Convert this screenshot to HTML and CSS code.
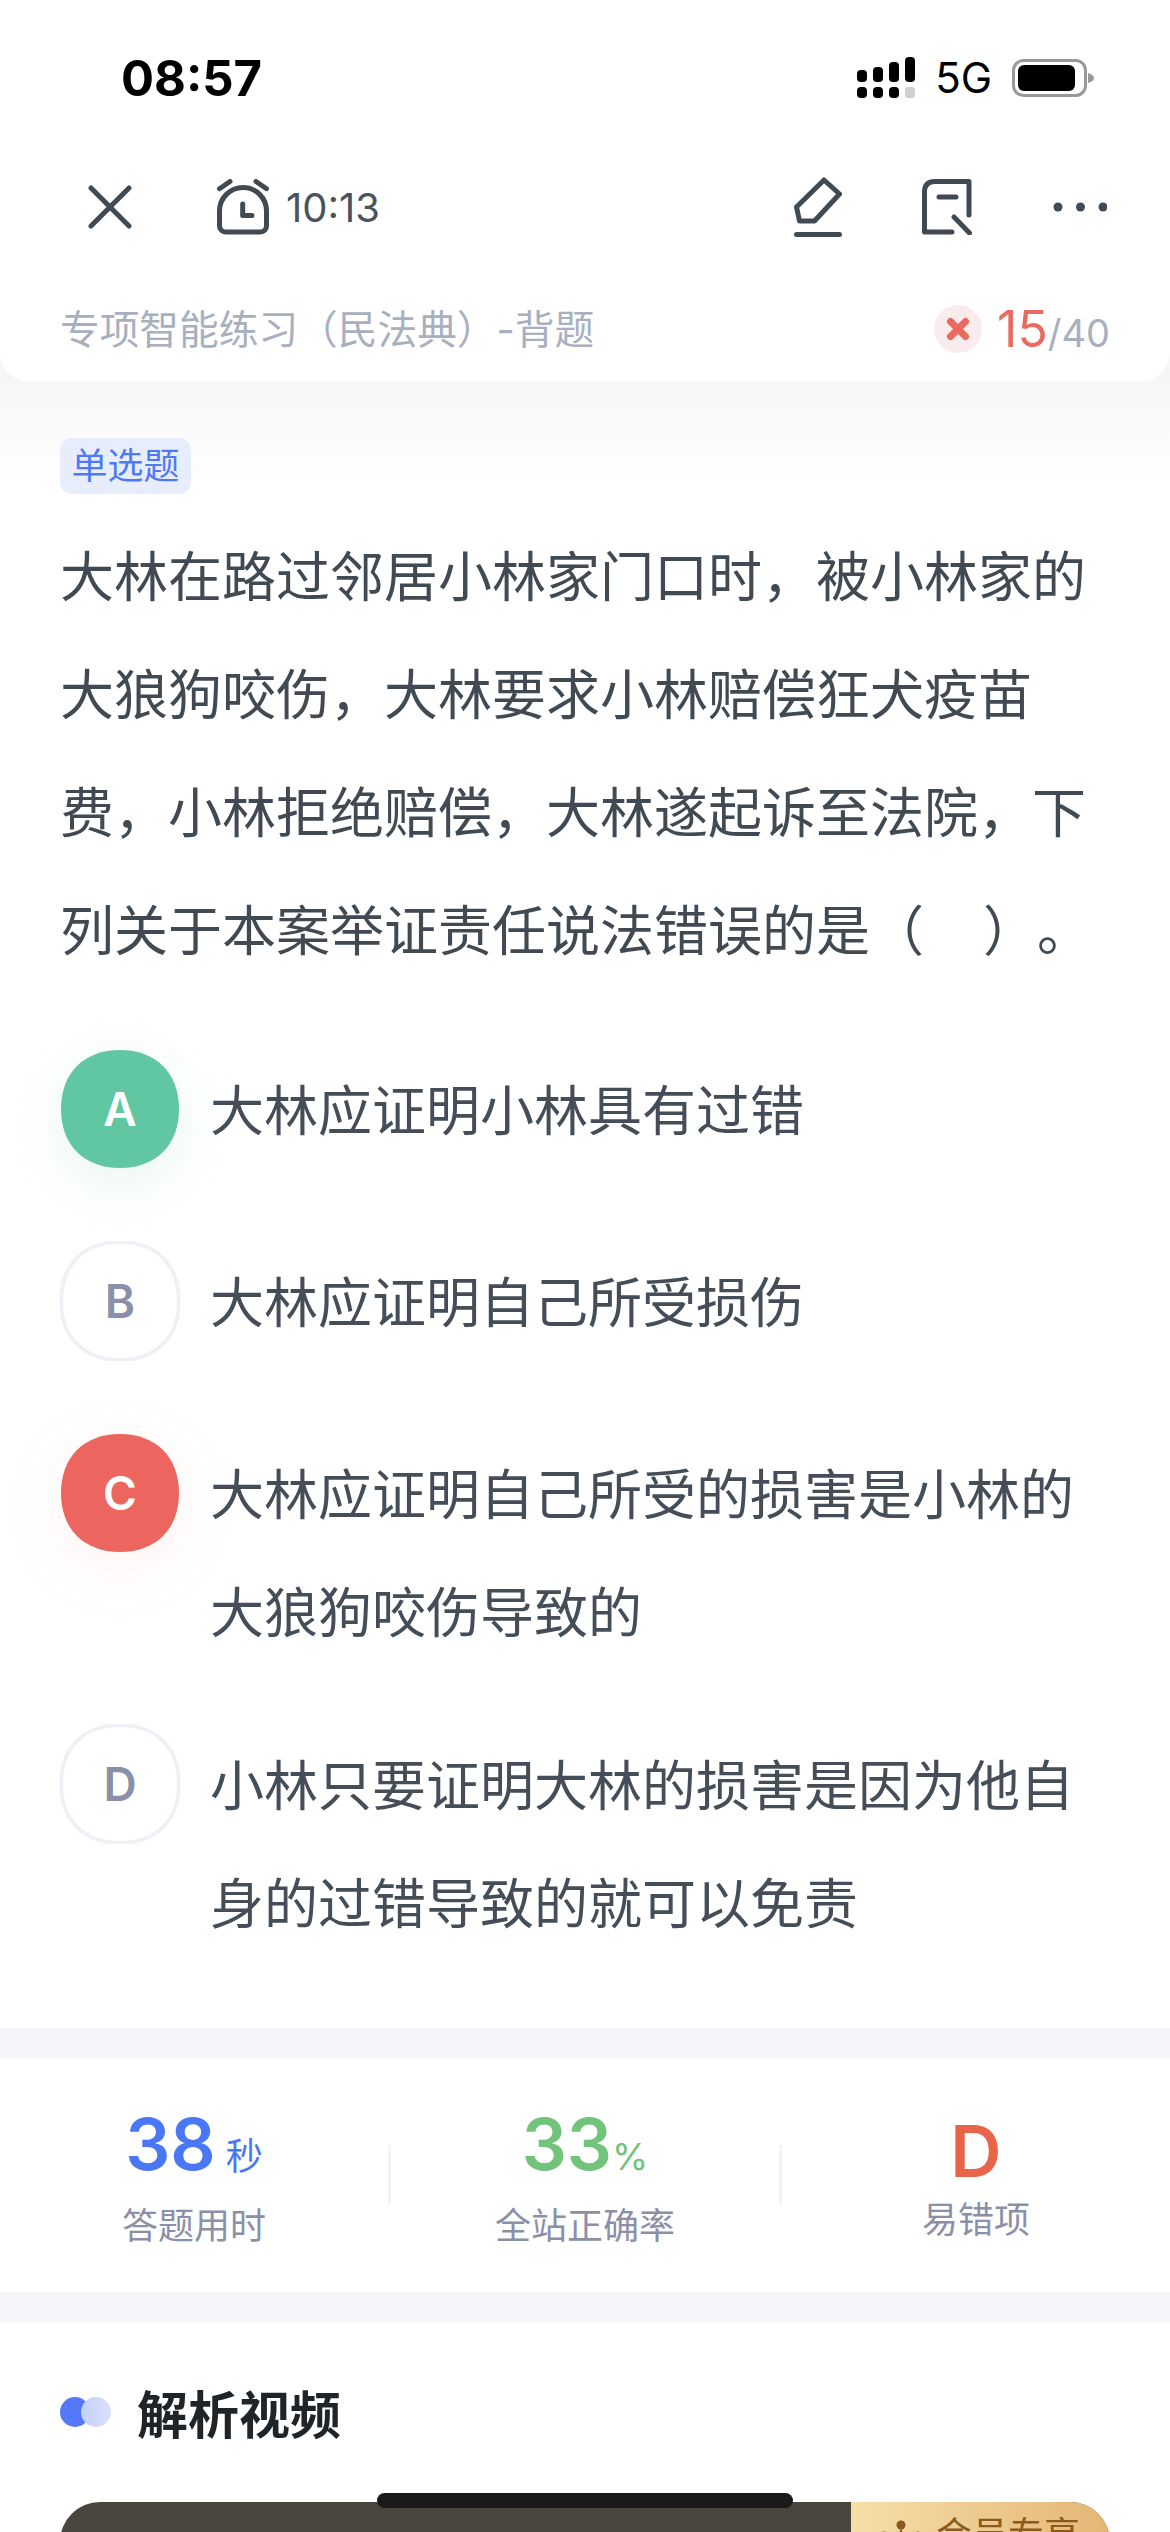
FILE: index.html
```html
<!DOCTYPE html>
<html lang="zh-CN">
  <head>
    <meta charset="UTF-8" />
    <meta name="viewport" content="width=device-width, initial-scale=1.0" />
    <title>专项智能练习</title>
    <link rel="stylesheet" href="styles.css">
  </head>
  <body>
    <header class="top">
      <div class="status">
        <span class="clock">08:57</span>
        <div class="status-right">
          <svg class="signal" width="58" height="42" viewBox="0 0 58 42">
            <rect x="0" y="13" width="10" height="12" rx="4" />
            <rect x="16" y="10" width="10" height="15" rx="4" />
            <rect x="32" y="5" width="10" height="20" rx="4" />
            <rect x="48" y="0" width="10" height="25" rx="4" />
            <rect x="0" y="30" width="10" height="11" rx="4" />
            <rect x="16" y="30" width="10" height="11" rx="4" />
            <rect x="32" y="30" width="10" height="11" rx="4" />
            <rect x="48" y="30" width="10" height="11" rx="3" fill="#cfcfcf" />
          </svg>
          <span class="net">5G</span>
          <svg class="battery" width="83" height="38" viewBox="0 0 83 38">
            <rect x="1.5" y="1.5" width="72" height="35" rx="10" fill="none" stroke="#999" stroke-width="3" />
            <rect x="6" y="6" width="57" height="26" rx="6" fill="#000" />
            <path d="M76 14c4 1 6 3 6 5s-2 4-6 5z" fill="#999" />
          </svg>
        </div>
      </div>

      <nav class="toolbar">
        <svg class="icon" width="44" height="44" viewBox="0 0 44 44">
          <path d="M3 3l38 38M41 3L3 41" />
        </svg>
        <svg class="icon alarm" width="52" height="56" viewBox="0 0 52 56">
          <path d="M2.5 32a23.5 23.5 0 0 1 47 0v15a6 6 0 0 1-6 6h-35a6 6 0 0 1-6-6z" />
          <path d="M2.5 9.7L13 2.5M39 2.5l10.5 7.2" />
          <path d="M25.7 25v11.5H35" />
        </svg>
        <span class="timer">10:13</span>
        <div class="toolbar-right">
          <svg class="icon" width="48" height="60" viewBox="0 0 48 60">
            <path d="M30 3l15.5 14-25 27H5.5l-3-14z" />
            <path d="M2.5 57.5h43" />
          </svg>
          <svg class="icon" width="50" height="56" viewBox="0 0 50 56">
            <path d="M47 36V2.5H13Q2.500 2.500 2.500 13V53H30" />
            <path d="M17 18h17M32 38l15.500 16" />
          </svg>
          <svg class="more" width="54" height="10" viewBox="0 0 54 10">
            <circle cx="5" cy="5" r="4.500" />
            <circle cx="27.500" cy="5" r="4.500" />
            <circle cx="50" cy="5" r="4.500" />
          </svg>
        </div>
      </nav>

      <div class="subbar">
        <span class="paper">专项智能练习（民法典）-背题</span>
        <div class="progress">
          <svg class="wrong" width="48" height="48" viewBox="0 0 48 48">
            <circle cx="24" cy="24" r="24" fill="#faecec" />
            <path d="M16.500 16.500l15 15M31.500 16.500l-15 15" />
          </svg>
          <span class="done">15</span><span class="total">/40</span>
        </div>
      </div>
    </header>

    <main class="question">
      <span class="tag">单选题</span>
      <p class="stem">大林在路过邻居小林家门口时，被小林家的大狼狗咬伤，大林要求小林赔偿狂犬疫苗费，小林拒绝赔偿，大林遂起诉至法院，下列关于本案举证责任说法错误的是（　&#8202;）。</p>

      <ul class="options">
        <li class="option right">
          <div class="badge">
            <svg width="120" height="120" viewBox="0 0 120 120"><path d="M60 1C96 1 119 24 119 60S96 119 60 119 1 96 1 60 24 1 60 1z" /></svg>
            <span>A</span>
          </div>
          <p>大林应证明小林具有过错</p>
        </li>
        <li class="option">
          <div class="badge">
            <svg width="120" height="120" viewBox="0 0 120 120"><path d="M60 1C96 1 119 24 119 60S96 119 60 119 1 96 1 60 24 1 60 1z" /></svg>
            <span>B</span>
          </div>
          <p>大林应证明自己所受损伤</p>
        </li>
        <li class="option wrong-pick">
          <div class="badge">
            <svg width="120" height="120" viewBox="0 0 120 120"><path d="M60 1C96 1 119 24 119 60S96 119 60 119 1 96 1 60 24 1 60 1z" /></svg>
            <span>C</span>
          </div>
          <p>大林应证明自己所受的损害是小林的大狼狗咬伤导致的</p>
        </li>
        <li class="option">
          <div class="badge">
            <svg width="120" height="120" viewBox="0 0 120 120"><path d="M60 1C96 1 119 24 119 60S96 119 60 119 1 96 1 60 24 1 60 1z" /></svg>
            <span>D</span>
          </div>
          <p>小林只要证明大林的损害是因为他自身的过错导致的就可以免责</p>
        </li>
      </ul>
    </main>

    <section class="stats">
      <div class="stat">
        <div class="value blue">38<small class="unit-gap">秒</small></div>
        <div class="label">答题用时</div>
      </div>
      <div class="divider"></div>
      <div class="stat">
        <div class="value green">33<small>%</small></div>
        <div class="label">全站正确率</div>
      </div>
      <div class="divider"></div>
      <div class="stat">
        <div class="value red">D</div>
        <div class="label">易错项</div>
      </div>
    </section>

    <section class="analysis">
      <h2><span class="dots"><i></i><i></i></span>解析视频</h2>
      <div class="video">
        <div class="vip">
          <svg width="42" height="30" viewBox="0 0 42 30">
            <circle cx="21" cy="6" r="4.500" />
            <path d="M21 8l6 22H15z" />
            <circle cx="4" cy="16" r="3.500" />
            <circle cx="38" cy="16" r="3.500" />
          </svg>
          <span>会员专享</span>
        </div>
      </div>
    </section>

    <div class="home-bar"></div>
  </body>
</html>
```

FILE: styles.css
```css
* {
  box-sizing: border-box;
}
html, body {
  height: 2532px;
  overflow: hidden;
}
body {
  position: relative;
  margin: 0;
  font-family: Inter, "Noto Sans CJK SC", sans-serif;
  color: #414a53;
  background: linear-gradient(#f6f6f6 382px, #fff 490px);
}
.top {
  background: #fff;
  border-radius: 0 0 30px 30px;
  height: 382px;
}
.status {
  display: flex;
  justify-content: space-between;
  align-items: center;
  height: 156px;
  padding: 0 75px 0 121px;
}
.clock {
  font-size: 49px;
  font-weight: 700;
  color: #000;
}
.status-right {
  display: flex;
  align-items: center;
  gap: 20px;
}
.signal {
  fill: #000;
}
.net {
  font-size: 42px;
  color: #000;
  line-height: 1;
}
.toolbar {
  display: flex;
  align-items: center;
  height: 102px;
  padding: 0 63px 0 88px;
}
.icon {
  fill: none;
  stroke: #414a53;
  stroke-width: 5;
  stroke-linecap: round;
  stroke-linejoin: round;
}
.alarm {
  margin-left: 85px;
}
.timer {
  margin-left: 17px;
  font-size: 40px;
  color: #4a535c;
}
.toolbar-right {
  display: flex;
  align-items: center;
  margin-left: auto;
}
.toolbar-right .icon:nth-child(2) {
  margin-left: 80px;
}
.more {
  margin-left: 81px;
  fill: #414a53;
}
.subbar {
  display: flex;
  justify-content: space-between;
  align-items: center;
  height: 80px;
  margin-top: 30px;
  padding: 0 60px;
}
.paper {
  margin-top: -4px;
  font-size: 39.7px;
  color: #a8b0c0;
}
.progress {
  display: flex;
  align-items: baseline;
  margin-top: 2px;
}
.wrong {
  align-self: center;
  margin-right: 15px;
  fill: none;
  stroke: #ea6a60;
  stroke-width: 7;
  stroke-linecap: round;
}
.wrong circle {
  stroke: none;
}
.done {
  font-size: 50px;
  color: #ea6a60;
}
.total {
  font-size: 38px;
  color: #a8b0c0;
}

.question {
  height: 1646px;
  padding: 56px 60px 0;
}
.tag {
  display: block;
  width: 131px;
  height: 56px;
  border-radius: 12px;
  background: #e8edfb;
  color: #4f7af5;
  font-size: 36px;
  line-height: 56px;
  text-align: center;
}
.stem {
  margin: 25px 0 58px;
  font-size: 54px;
  line-height: 118px;
  text-spacing-trim: space-all;
}
.options {
  display: flex;
  flex-direction: column;
  gap: 55px;
  margin: 0;
  padding: 0;
  list-style: none;
}
.option {
  display: flex;
  gap: 30px;
  min-height: 137px;
}
.option p {
  flex: 1;
  margin: 4px 0 -4px;
  font-size: 54px;
  line-height: 118px;
  color: #454e58;
}
.badge {
  display: grid;
  flex: none;
  width: 120px;
  height: 120px;
  place-items: center;
}
.badge svg, .badge span {
  grid-area: 1 / 1;
}
.badge svg {
  fill: #fff;
  stroke: #f0f1f6;
  stroke-width: 4;
}
.badge span {
  position: relative;
  font-size: 46px;
  font-weight: 600;
  color: #8b90aa;
}
.right svg {
  fill: #61c7a3;
  stroke: none;
  filter: drop-shadow(0 16px 30px rgba(97, 199, 163, 0.16));
}
.wrong-pick svg {
  fill: #ec665f;
  stroke: none;
  filter: drop-shadow(0 16px 30px rgba(236, 102, 95, 0.08));
}
.right span, .wrong-pick span {
  color: #fff;
}

.stats {
  display: flex;
  align-items: center;
  height: 294px;
  background: #fff;
  border-top: 30px solid #f5f6fa;
  border-bottom: 30px solid #f5f6fa;
}
.stat {
  flex: 1;
  text-align: center;
}
.divider {
  flex: none;
  width: 3px;
  height: 60px;
  background: #f3f4f8;
}
.value {
  font-size: 71px;
  font-weight: 600;
  line-height: 84px;
}
.value small {
  font-size: 37px;
  font-weight: 400;
}
.unit-gap {
  margin-left: 10px;
}
.blue {
  color: #4a78f5;
}
.green {
  color: #72c37b;
}
.red {
  color: #e8654a;
}
.label {
  margin-top: 5px;
  font-size: 36px;
  line-height: 44px;
  color: #8b90a8;
}

.analysis {
  padding: 0 60px;
}
.analysis h2 {
  display: flex;
  align-items: center;
  height: 60px;
  margin: 60px 0 0;
  font-size: 51px;
  font-weight: 700;
  color: #1f2429;
}
.dots {
  display: flex;
  margin-right: 26px;
}
.dots i {
  display: block;
  width: 30px;
  height: 30px;
  border-radius: 50%;
  background: #5579f6;
}
.dots i + i {
  margin-left: -9px;
  background: linear-gradient(90deg, #c3d0f8, #d9e1fb);
}
.video {
  display: flex;
  justify-content: flex-end;
  height: 300px;
  margin-top: 60px;
  border-radius: 40px 40px 0 0;
  background: #49463d;
  overflow: hidden;
}
.vip {
  display: flex;
  align-items: flex-start;
  gap: 14px;
  width: 259px;
  height: 70px;
  padding: 15px 0 0 29px;
  background: linear-gradient(90deg, #f6dfa9, #e4b674);
  color: #8a5a1e;
  font-size: 36px;
  line-height: 36px;
}
.vip svg {
  flex: none;
  margin-top: 2px;
  fill: #8a5a1e;
}
.home-bar {
  position: absolute;
  left: 377px;
  top: 2493px;
  width: 416px;
  height: 15px;
  border-radius: 8px;
  background: #1a1a1a;
}
```
